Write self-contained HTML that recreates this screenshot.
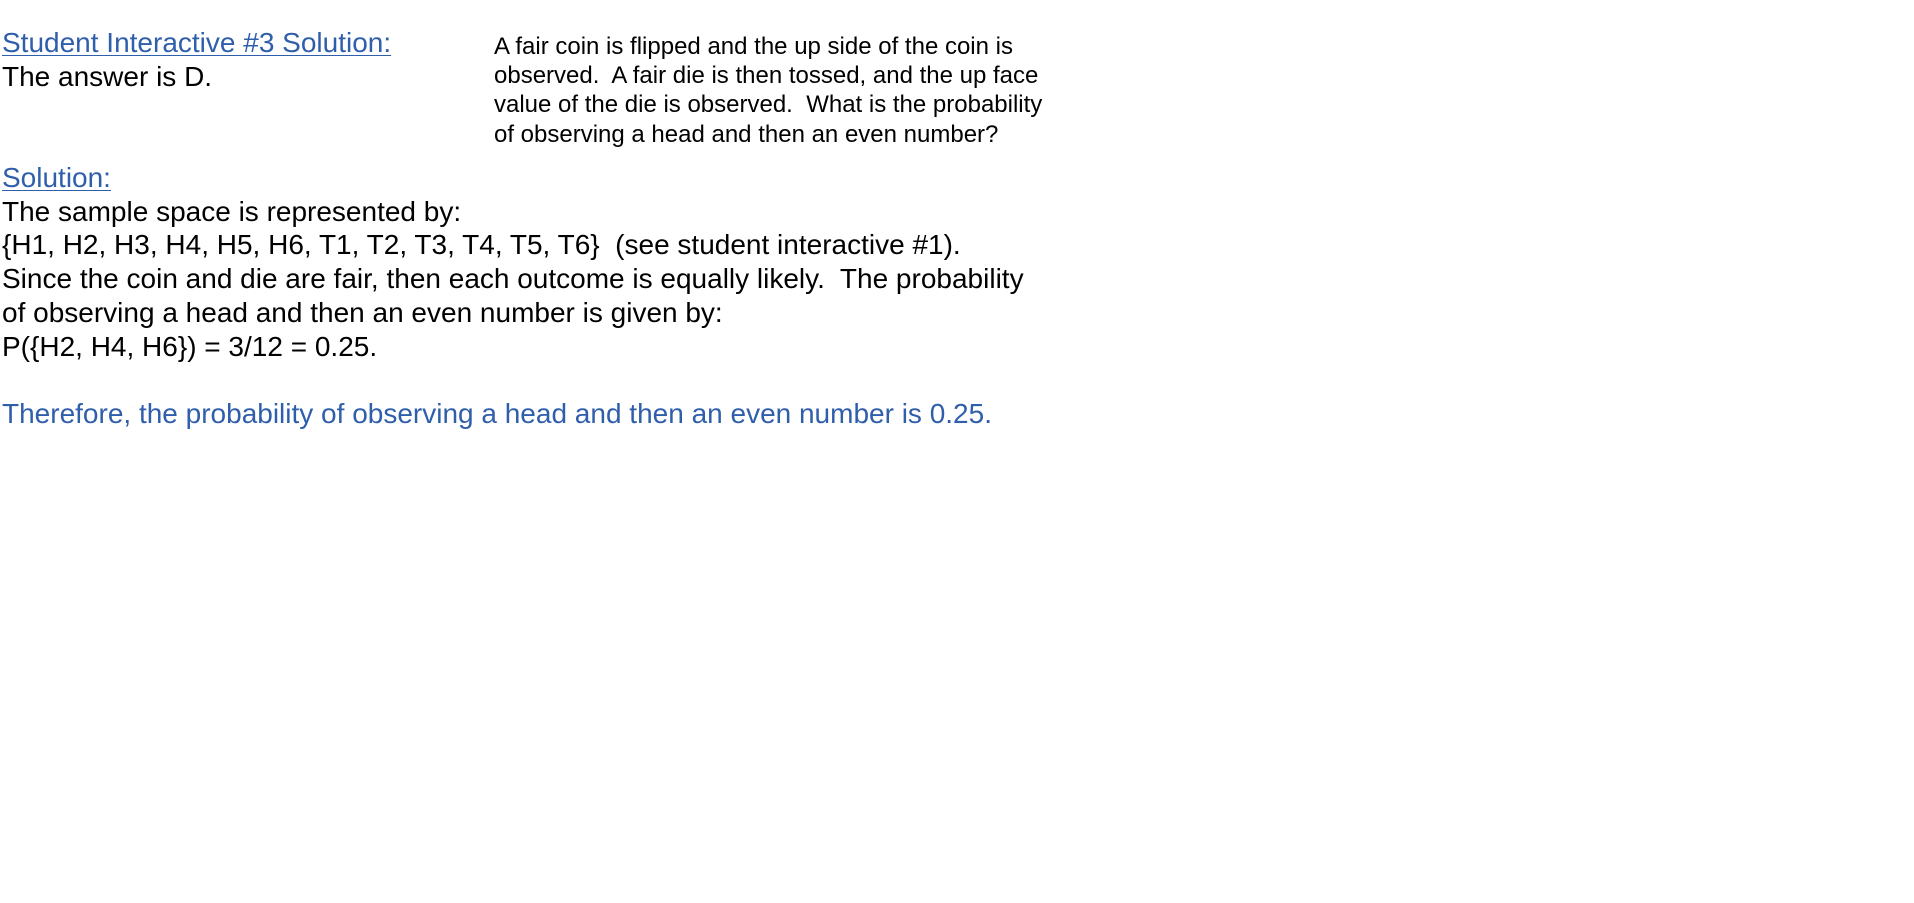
<!DOCTYPE html>
<html><head><meta charset="utf-8"><style>
body{margin:0;width:1914px;height:903px;background:#fff;font-family:"Liberation Sans",Arial,sans-serif;position:relative;overflow:hidden}
.l{position:absolute;left:2px;font-size:28px;line-height:33.7px;color:#000;white-space:nowrap}
.b{color:#2f5eab}
.u{text-decoration:underline;text-decoration-thickness:1px;text-underline-offset:3px}
.r{position:absolute;left:494px;top:32px;font-size:24px;line-height:29.2px;color:#000;white-space:nowrap}
</style></head><body>
<div class="l" style="top:26px"><span class="b u">Student Interactive #3 Solution:</span><br>The answer is D.</div>
<div class="r">A fair coin is flipped and the up side of the coin is<br>observed.&nbsp; A fair die is then tossed, and the up face<br>value of the die is observed.&nbsp; What is the probability<br>of observing a head and then an even number?</div>
<div class="l" style="top:161px"><span class="b u">Solution:</span><br>The sample space is represented by:<br>{H1, H2, H3, H4, H5, H6, T1, T2, T3, T4, T5, T6}&nbsp; (see student interactive #1).<br>Since the coin and die are fair, then each outcome is equally likely.&nbsp; The probability<br>of observing a head and then an even number is given by:<br>P({H2, H4, H6}) = 3/12 = 0.25.<br><br><span class="b">Therefore, the probability of observing a head and then an even number is 0.25.</span></div>
</body></html>
